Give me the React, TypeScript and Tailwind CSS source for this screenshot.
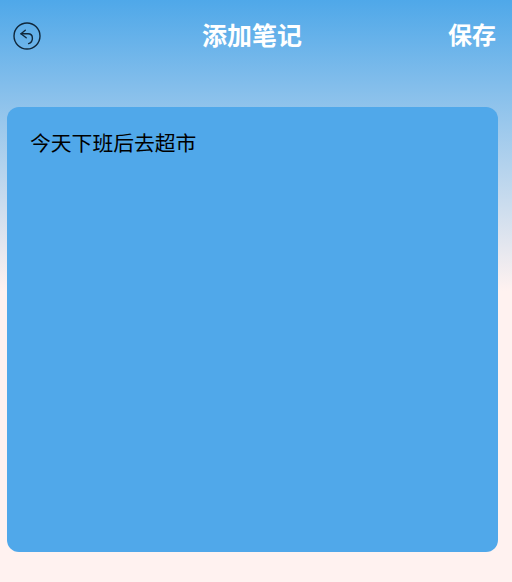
const font = "[font-family:'Noto_Sans_CJK_SC','Liberation_Sans',sans-serif]";

export default function App() {
  return (
    <div className={`flex h-[582px] w-[512px] flex-col overflow-hidden bg-[linear-gradient(180deg,#4fa8e9_0%,#fff2f0_50%,#fff2f0_100%)] ${font}`}>
      {/* header */}
      <header className="flex h-[72px] shrink-0 items-center justify-between pl-[13px] pr-4">
        <button className="h-7 w-7 text-[#10283c]">
          <svg viewBox="0 0 28 28" className="h-7 w-7" fill="none" stroke="currentColor" strokeWidth="1.4" strokeLinecap="round" strokeLinejoin="round">
            <circle cx="14" cy="14" r="13" />
            <path d="M12.3 8.2 8 11.8 13.2 15.8" />
            <path d="M8 11.8h7c2.8 0 4.4 1.8 4.4 4.4 0 2.8-1.5 4.8-3.8 5.4" />
          </svg>
        </button>
        <h1 className="ml-[15px] -mt-1 text-[25px] font-bold leading-none text-white">添加笔记</h1>
        <button className="-mt-1 text-2xl font-bold leading-none text-white">保存</button>
      </header>

      {/* note */}
      <main className="mt-[35px] ml-[7px] h-[445px] w-[491px] rounded-xl bg-[#50a8ea] pl-[23px] pt-[22px]">
        <p className="text-[20.8px] leading-[26px] text-black">今天下班后去超市</p>
      </main>
    </div>
  );
}
